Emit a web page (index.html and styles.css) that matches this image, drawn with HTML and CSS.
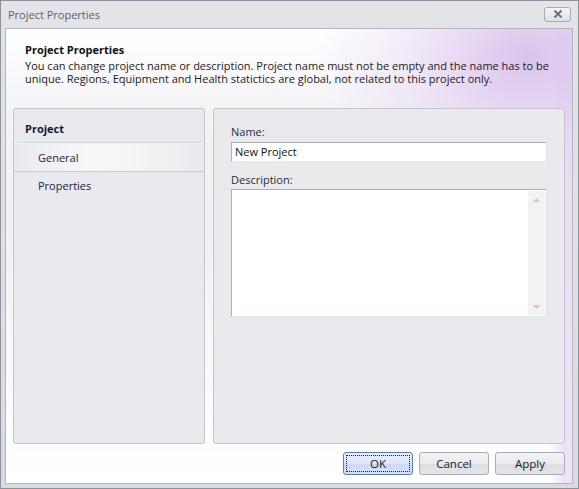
FILE: index.html
```html
<!DOCTYPE html>
<html>
<head>
<meta charset="utf-8">
<title>Project Properties</title>
<link rel="stylesheet" href="styles.css">
</head>
<body>
<div class="window">
  <div class="titlebar">
    <span class="title">Project Properties</span>
    <button class="close" aria-label="Close">
      <svg width="10" height="8" viewBox="0 0 10 8"><path d="M1.5 0.5 L8.5 7.5 M8.5 0.5 L1.5 7.5" stroke="#6b6f78" stroke-width="2"/></svg>
    </button>
  </div>
  <div class="client">
    <div class="header">
      <div class="header-title">Project Properties</div>
      <div class="header-text">You can change project name or description. Project name must not be empty and the name has to be unique. Regions, Equipment and Health statictics are global, not related to this project only.</div>
    </div>
    <div class="panels">
      <div class="panel nav">
        <div class="nav-head">Project</div>
        <div class="nav-item selected">General</div>
        <div class="nav-item">Properties</div>
      </div>
      <div class="panel form">
        <label class="label">Name:</label>
        <div class="input">New Project</div>
        <label class="label desc-label">Description:</label>
        <div class="textarea">
          <div class="scroll">
            <svg width="7" height="4" viewBox="0 0 7 4"><path d="M0 4 L3.5 0 L7 4 Z" fill="#c8cad0"/></svg>
            <svg width="7" height="4" viewBox="0 0 7 4"><path d="M0 0 L3.5 4 L7 0 Z" fill="#c8cad0"/></svg>
          </div>
        </div>
      </div>
    </div>
    <div class="buttons">
      <button class="btn default"><span class="focus">OK</span></button>
      <button class="btn">Cancel</button>
      <button class="btn">Apply</button>
    </div>
  </div>
</div>
</body>
</html>
```

FILE: styles.css
```css
html, body {
  margin: 0;
  padding: 0;
}
body {
  width: 579px;
  height: 489px;
  font-family: "Open Sans", "Noto Sans", sans-serif;
  font-size: 11px;
  color: #1e1e1e;
  overflow: hidden;
}
.window {
  box-sizing: border-box;
  width: 579px;
  height: 489px;
  background: linear-gradient(#e2e4e8, #d9dbe0);
  border: 1px solid #8e929b;
  padding: 0 5px 4px 4px;
  display: flex;
  flex-direction: column;
}
.titlebar {
  height: 27px;
  display: flex;
  align-items: center;
  justify-content: space-between;
  padding-left: 3px;
}
.title {
  color: #5b5f66;
  font-size: 11px;
  margin-top: -1px;
}
.close {
  width: 27px;
  height: 15px;
  margin-right: 2px;
  margin-top: -1px;
  border: 1px solid #a8abb2;
  border-radius: 3px;
  background: linear-gradient(#f3f4f6, #dfe1e5);
  display: flex;
  align-items: center;
  justify-content: center;
  padding: 0;
}
.client {
  flex: 1;
  border: 1px solid #b3b6bd;
  background:
    radial-gradient(ellipse 210px 170px at 92% 6%, rgba(214, 190, 236, 0.9), rgba(230, 214, 242, 0.5) 55%, rgba(255,255,255,0) 100%),
    linear-gradient(90deg, rgba(255,255,255,0) 96%, rgba(230, 214, 244, 0.7) 98.5%),
    linear-gradient(#ffffff 0, #f4f4f7 80px, #f2f2f5 200px, #ffffff 100%);
  display: flex;
  flex-direction: column;
  padding: 0 7px 8px 7px;
}
.header {
  padding: 13px 8px 0 12px;
  height: 66px;
  box-sizing: border-box;
}
.header-title {
  font-weight: bold;
  color: #111;
  line-height: 15px;
  margin-bottom: 2px;
}
.header-text {
  line-height: 13px;
  color: #1a1a1a;
}
.panels {
  display: flex;
  gap: 8px;
  margin-top: 13px;
  height: 336px;
}
.panel {
  box-sizing: border-box;
  background: #e9eaee;
  border: 1px solid #c3c5cb;
  border-radius: 3px;
}
.nav {
  width: 192px;
  padding-top: 11px;
}
.nav-head {
  font-weight: bold;
  color: #101a3c;
  height: 22px;
  line-height: 17px;
  border-bottom: 1px solid #d4d6db;
  margin: 0 3px;
  padding-left: 8px;
}
.nav-item {
  height: 27px;
  line-height: 27px;
  padding-left: 24px;
  color: #1c2140;
}
.nav-item.selected {
  background: linear-gradient(90deg, rgba(255,255,255,0) 0%, #f8f8fa 40%, #f4f4f6 65%, rgba(255,255,255,0) 100%);
  border-bottom: 1px solid #c9cbd0;
  border-top: 1px solid #f7f7f9;
}
.form {
  flex: 1;
  padding: 16px 17px 0 17px;
}
.label {
  display: block;
  color: #2a2a3a;
  line-height: 14px;
  margin-bottom: 3px;
}
.desc-label {
  margin-top: 11px;
  margin-bottom: 2px;
}
.input {
  box-sizing: border-box;
  height: 20px;
  background: #fff;
  border: 1px solid #abadb3;
  border-right-color: #dbdfe6;
  border-bottom-color: #e3e9ef;
  padding-left: 3px;
  line-height: 18px;
  color: #111;
}
.textarea {
  box-sizing: border-box;
  height: 128px;
  background: #fff;
  border: 1px solid #abadb3;
  border-right-color: #dbdfe6;
  border-bottom-color: #e3e9ef;
  display: flex;
  justify-content: flex-end;
  padding: 1px;
}
.scroll {
  width: 17px;
  background: #f2f2f4;
  display: flex;
  flex-direction: column;
  justify-content: space-between;
  align-items: center;
  padding: 7px 0 6px;
}
.buttons {
  display: flex;
  justify-content: flex-end;
  gap: 6px;
  margin-top: auto;
}
.btn {
  box-sizing: border-box;
  width: 70px;
  height: 23px;
  font-family: inherit;
  font-size: 11.5px;
  color: #1a1a1a;
  border: 1px solid #a9acb3;
  border-radius: 3px;
  background: linear-gradient(#f3f4f6 0%, #e9eaed 50%, #dcdee2 51%, #e2e4e8 100%);
  padding: 0;
}
.btn.default {
  border-color: #5d7cae;
  background: linear-gradient(#e8f0fd 0%, #dbe6fb 50%, #cbdaf6 51%, #d4e1f8 100%);
  padding: 2px;
}
.focus {
  display: flex;
  align-items: center;
  justify-content: center;
  height: 100%;
  border: 1px dotted #222;
  box-sizing: border-box;
}
```
